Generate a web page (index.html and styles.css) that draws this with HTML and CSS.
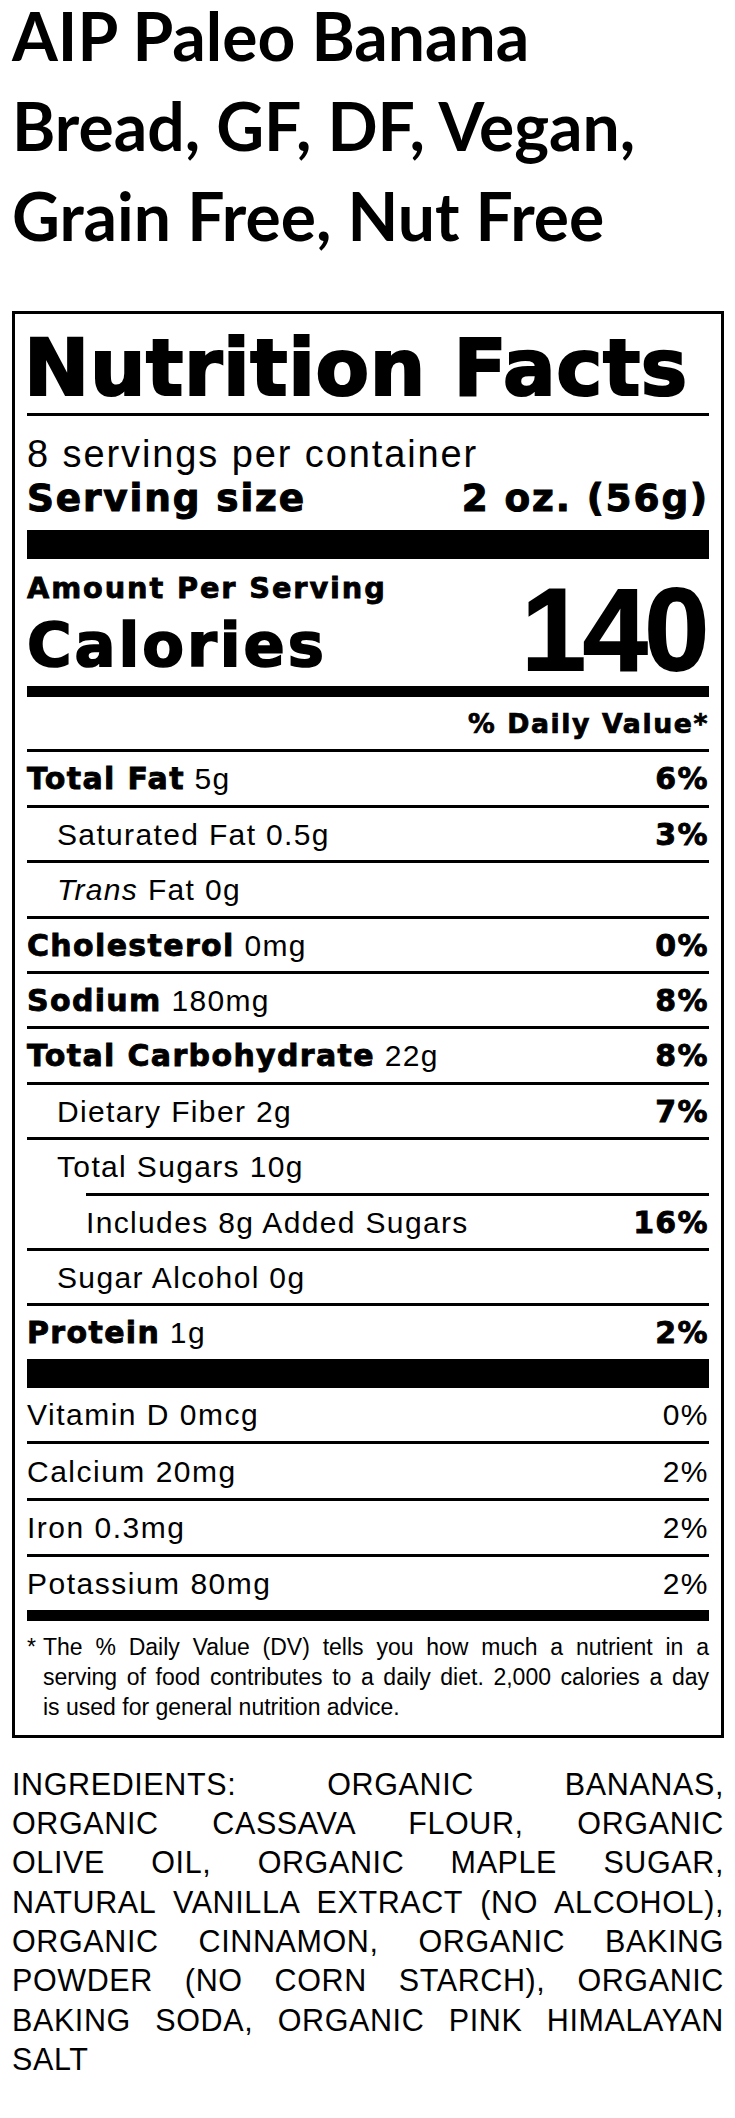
FILE: index.html
```html
<!DOCTYPE html>
<html lang="en">
<head>
<meta charset="utf-8">
<title>AIP Paleo Banana Bread – Nutrition Facts</title>
<link rel="stylesheet" href="styles.css">
</head>
<body>
<main class="page">
  <h1 class="title">AIP Paleo Banana<br>Bread, GF, DF, Vegan,<br>Grain Free, Nut Free</h1>

  <section class="label">
    <h2 class="label-heading">Nutrition Facts</h2>

    <div class="servings">
      <p class="servings-per">8 servings per container</p>
      <p class="serving-size"><span>Serving size</span><span>2 oz. (56g)</span></p>
    </div>

    <div class="calories">
      <p class="amount">Amount Per Serving</p>
      <p class="calories-row"><span class="calories-label">Calories</span><span class="calories-value">140</span></p>
    </div>

    <p class="dv-head">% Daily Value*</p>

    <ul class="nutrients">
      <li class="row"><span><b>Total Fat</b> 5g</span><b>6%</b></li>
      <li class="row indent"><span>Saturated Fat 0.5g</span><b>3%</b></li>
      <li class="row indent"><span><i>Trans</i> Fat 0g</span></li>
      <li class="row"><span><b>Cholesterol</b> 0mg</span><b>0%</b></li>
      <li class="row"><span><b>Sodium</b> 180mg</span><b>8%</b></li>
      <li class="row"><span><b>Total Carbohydrate</b> 22g</span><b>8%</b></li>
      <li class="row indent"><span>Dietary Fiber 2g</span><b>7%</b></li>
      <li class="row indent"><span>Total Sugars 10g</span></li>
      <li class="row sub"><span>Includes 8g Added Sugars</span><b>16%</b></li>
      <li class="row indent"><span>Sugar Alcohol 0g</span></li>
      <li class="row"><span><b>Protein</b> 1g</span><b>2%</b></li>
    </ul>

    <ul class="vitamins">
      <li class="vit-row"><span>Vitamin D 0mcg</span><span>0%</span></li>
      <li class="vit-row"><span>Calcium 20mg</span><span>2%</span></li>
      <li class="vit-row"><span>Iron 0.3mg</span><span>2%</span></li>
      <li class="vit-row"><span>Potassium 80mg</span><span>2%</span></li>
    </ul>

    <div class="footnote">
      <span class="asterisk">*</span>
      <p class="footnote-text">
        <span class="line">The % Daily Value (DV) tells you how much a nutrient in a</span>
        <span class="line">serving of food contributes to a daily diet. 2,000 calories a day</span>
        <span class="line line-last">is used for general nutrition advice.</span>
      </p>
    </div>
  </section>

  <p class="ingredients">
    <span class="line">INGREDIENTS: ORGANIC BANANAS,</span>
    <span class="line">ORGANIC CASSAVA FLOUR, ORGANIC</span>
    <span class="line">OLIVE OIL, ORGANIC MAPLE SUGAR,</span>
    <span class="line">NATURAL VANILLA EXTRACT (NO ALCOHOL),</span>
    <span class="line">ORGANIC CINNAMON, ORGANIC BAKING</span>
    <span class="line">POWDER (NO CORN STARCH), ORGANIC</span>
    <span class="line">BAKING SODA, ORGANIC PINK HIMALAYAN</span>
    <span class="line line-last">SALT</span>
  </p>
</main>
</body>
</html>
```

FILE: styles.css
```css
* {
  box-sizing: border-box;
}

html,
body {
  margin: 0;
  padding: 0;
  background: #ffffff;
  color: #000000;
}

.page {
  padding: 0 11px 0 12px;
  font-family: "Liberation Sans", Arial, sans-serif;
}

.title {
  margin: -9px 0 50px;
  font: 700 66px/90px Lato, "Liberation Sans", sans-serif;
  color: #000;
}

/* ---------- Nutrition label ---------- */

.label {
  border: 3px solid #000;
  padding: 0 12px 13px;
}

.label-heading,
.serving-size,
.amount,
.calories-label,
.dv-head,
.row b {
  font-family: "DejaVu Sans", sans-serif;
  font-weight: 700;
  -webkit-text-stroke: 0.028em #000;
}

.label-heading {
  margin: 15px 0 0;
  padding-bottom: 6px;
  border-bottom: 3px solid #000;
  font-size: 78px;
  line-height: 78px;
  letter-spacing: 0.6px;
  text-indent: -3px;
}

.servings {
  padding: 16px 0 10px;
  border-bottom: 29px solid #000;
}

.servings-per {
  margin: 0;
  font-size: 38px;
  line-height: 44px;
  letter-spacing: 0.05em;
}

.serving-size {
  margin: 0;
  display: flex;
  justify-content: space-between;
  align-items: baseline;
  font-size: 37.4px;
  line-height: 44px;
  letter-spacing: 0.05em;
}

.calories {
  padding: 17px 0 26px;
  border-bottom: 11px solid #000;
}

.amount {
  margin: 0;
  font-size: 28.8px;
  line-height: 24px;
  letter-spacing: 0.065em;
}

.calories-row {
  margin: 0;
  display: flex;
  justify-content: space-between;
  align-items: flex-end;
}

.calories-label {
  font-size: 60.8px;
  line-height: 30px;
  letter-spacing: 0.048em;
}

.calories-value {
  margin-right: 3px;
  font: 700 116px/60px "Liberation Sans", Arial, sans-serif;
  letter-spacing: -3px;
  -webkit-text-stroke: 1.8px #000;
}

.dv-head {
  margin: 0;
  padding: 11.8px 0 10.5px;
  text-align: right;
  font-size: 26.7px;
  line-height: 30px;
  letter-spacing: 0.06em;
}

.nutrients,
.vitamins {
  list-style: none;
  margin: 0;
  padding: 0;
}

.row {
  display: flex;
  justify-content: space-between;
  align-items: baseline;
  border-top: 3px solid #000;
  padding-top: 1px;
  font-size: 30px;
  line-height: 51.4px;
  letter-spacing: 0.045em;
}

.row b {
  letter-spacing: 0.045em;
}

.row i {
  font-style: italic;
}

.indent {
  padding-left: 30px;
}

.sub {
  margin-left: 59px;
}

.vitamins {
  border-top: 29px solid #000;
}

.vit-row {
  display: flex;
  justify-content: space-between;
  align-items: baseline;
  border-top: 3px solid #000;
  padding-top: 1.5px;
  font-size: 30px;
  line-height: 51.9px;
  letter-spacing: 0.05em;
}

.vit-row:first-child {
  border-top: 0;
}

.footnote {
  display: flex;
  border-top: 11px solid #000;
  padding-top: 10.7px;
  font-size: 23px;
  line-height: 30px;
}

.asterisk {
  flex: 0 0 16px;
}

.footnote-text {
  flex: 1;
  margin: 0;
}

.line {
  display: block;
  text-align: justify;
  text-align-last: justify;
}

.line-last {
  text-align-last: left;
}

/* ---------- Ingredients ---------- */

.ingredients {
  margin: 26.8px 0 0;
  font-size: 30.5px;
  line-height: 39.3px;
  letter-spacing: 0.02em;
}
```
